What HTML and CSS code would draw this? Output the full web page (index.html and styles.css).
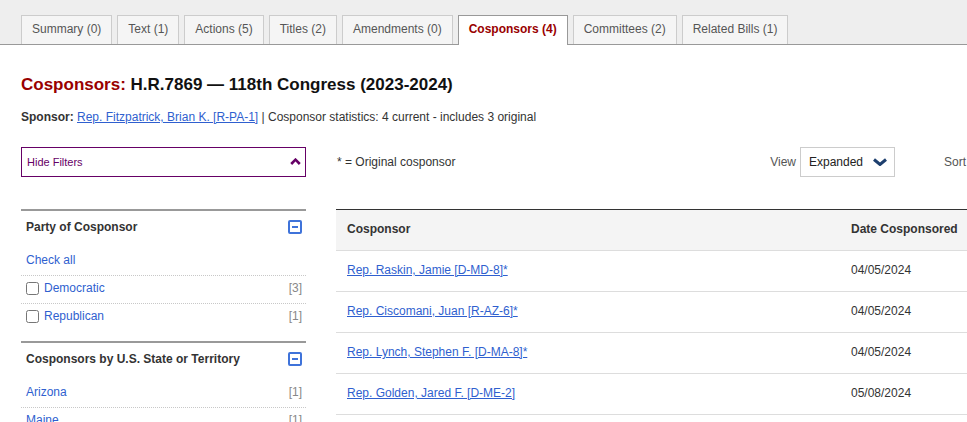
FILE: index.html
```html
<!DOCTYPE html>
<html lang="en">
<head>
<meta charset="utf-8">
<title>Cosponsors: H.R.7869 — 118th Congress (2023-2024)</title>
<link rel="stylesheet" href="styles.css">
</head>
<body>
<div class="tabbar">
  <nav class="tabs">
    <a class="tab" href="#">Summary (0)</a>
    <a class="tab" href="#">Text (1)</a>
    <a class="tab" href="#">Actions (5)</a>
    <a class="tab" href="#">Titles (2)</a>
    <a class="tab" href="#">Amendments (0)</a>
    <a class="tab tab-active" href="#">Cosponsors (4)</a>
    <a class="tab" href="#">Committees (2)</a>
    <a class="tab" href="#">Related Bills (1)</a>
  </nav>
</div>

<div class="page">
  <h1 class="title"><span class="title-label">Cosponsors:</span> H.R.7869 — 118th Congress (2023-2024)</h1>
  <p class="sponsor"><strong>Sponsor:</strong> <a href="#">Rep. Fitzpatrick, Brian K. [R-PA-1]</a> | Cosponsor statistics: 4 current - includes 3 original</p>

  <div class="layout">
    <aside class="sidebar">
      <button class="hide-filters" type="button">
        <span>Hide Filters</span>
        <svg class="chev-up" width="11" height="7" viewBox="0 0 11 7" aria-hidden="true"><polyline points="1.2,6 5.5,1.7 9.8,6" fill="none" stroke="#660066" stroke-width="2.6"/></svg>
      </button>

      <section class="facet">
        <div class="facet-head">
          <h2>Party of Cosponsor</h2>
          <span class="collapse-icon" aria-hidden="true"></span>
        </div>
        <ul class="facet-list">
          <li><a href="#">Check all</a></li>
          <li><label class="opt"><input type="checkbox"><a href="#">Democratic</a></label><span class="count">[3]</span></li>
          <li><label class="opt"><input type="checkbox"><a href="#">Republican</a></label><span class="count">[1]</span></li>
        </ul>
      </section>

      <section class="facet">
        <div class="facet-head">
          <h2>Cosponsors by U.S. State or Territory</h2>
          <span class="collapse-icon" aria-hidden="true"></span>
        </div>
        <ul class="facet-list">
          <li><a href="#">Arizona</a><span class="count">[1]</span></li>
          <li><a href="#">Maine</a><span class="count">[1]</span></li>
          <li><a href="#">Maryland</a><span class="count">[1]</span></li>
        </ul>
      </section>
    </aside>

    <main class="results">
      <div class="toolbar">
        <span class="legend">* = Original cosponsor</span>
        <div class="control">
          <span class="control-label">View</span>
          <div class="select">
            <span>Expanded</span>
            <svg width="16" height="8" viewBox="0 0 16 8" aria-hidden="true"><polyline points="2,1.5 8,6.5 14,1.5" fill="none" stroke="#1d3f6e" stroke-width="3"/></svg>
          </div>
        </div>
        <div class="control control-sort">
          <span class="control-label">Sort</span>
          <div class="select select-sort">
            <span>By Date</span>
          </div>
        </div>
      </div>

      <table class="cosponsors">
        <thead>
          <tr><th class="col-name">Cosponsor</th><th>Date Cosponsored</th></tr>
        </thead>
        <tbody>
          <tr><td><a href="#">Rep. Raskin, Jamie [D-MD-8]*</a></td><td>04/05/2024</td></tr>
          <tr><td><a href="#">Rep. Ciscomani, Juan [R-AZ-6]*</a></td><td>04/05/2024</td></tr>
          <tr><td><a href="#">Rep. Lynch, Stephen F. [D-MA-8]*</a></td><td>04/05/2024</td></tr>
          <tr><td><a href="#">Rep. Golden, Jared F. [D-ME-2]</a></td><td>05/08/2024</td></tr>
        </tbody>
      </table>
    </main>
  </div>
</div>
</body>
</html>
```

FILE: styles.css
```css
html, body {
  overflow: hidden;
}
body {
  margin: 0;
  font-family: "Liberation Sans", Arial, sans-serif;
  font-size: 12px;
  color: #333;
  background: #fff;
}
a {
  color: #2f5fcf;
}

/* Tabs */
.tabbar {
  background: #eee;
  border-bottom: 1px solid #999;
}
.tabs {
  display: flex;
  align-items: flex-end;
  gap: 5px;
  padding: 15px 0 0 21px;
  height: 29px;
}
.tab {
  display: block;
  flex: none;
  border: 1px solid #ccc;
  border-bottom: none;
  background: #f5f5f5;
  padding: 5px 10px 7px;
  line-height: 16px;
  font-size: 12px;
  color: #555;
  text-decoration: none;
  white-space: nowrap;
}
.tab-active {
  background: #fff;
  border-color: #999;
  color: #900;
  font-weight: bold;
  padding-bottom: 8px;
  margin-bottom: -1px;
}

/* Header */
.page {
  padding: 0 21px;
}
.title {
  margin: 29px 0 0;
  font-size: 17px;
  line-height: 22px;
  font-weight: bold;
  color: #111;
  white-space: nowrap;
}
.title-label {
  color: #900;
}
.sponsor {
  margin: 13px 0 0;
  line-height: 16px;
  white-space: nowrap;
}
.sponsor strong {
  color: #333;
}

/* Layout */
.layout {
  display: flex;
  gap: 30px;
  margin-top: 22px;
  align-items: flex-start;
}
.sidebar {
  flex: none;
  width: 285px;
}
.results {
  flex: none;
  width: 738px;
}

/* Sidebar */
.hide-filters {
  display: flex;
  justify-content: space-between;
  align-items: center;
  width: 285px;
  height: 30px;
  margin: 0;
  padding: 0 4px 0 5px;
  border: 1px solid #660066;
  background: #fff;
  font-family: "Liberation Sans", Arial, sans-serif;
  font-size: 11px;
  color: #660066;
  cursor: pointer;
}
.chev-up {
  display: block;
  margin-top: -1px;
}
.facet {
  margin-top: 32px;
  border-top: 2px solid #999;
  padding-bottom: 10px;
}
.facet + .facet {
  margin-top: 0;
}
.facet-head {
  display: flex;
  justify-content: space-between;
  align-items: center;
  padding: 8px 4px 8px 5px;
}
.facet-head h2 {
  margin: 0;
  font-size: 12px;
  line-height: 16px;
  font-weight: bold;
  color: #333;
}
.collapse-icon {
  position: relative;
  box-sizing: border-box;
  width: 14px;
  height: 14px;
  border: 2px solid #3f73da;
  border-radius: 2px;
}
.collapse-icon::after {
  content: "";
  position: absolute;
  left: 2px;
  right: 2px;
  top: 4px;
  height: 2px;
  background: #3f73da;
}
.facet-list {
  list-style: none;
  margin: 0;
  padding: 5px 0 0;
}
.facet-list li {
  display: flex;
  justify-content: space-between;
  align-items: center;
  padding: 5px 4px 7px 5px;
  line-height: 15px;
  border-bottom: 1px dotted #c8c8c8;
}
.facet-list li:last-child {
  border-bottom: none;
}
.facet-list a {
  text-decoration: none;
  color: #2f5fcf;
}
.opt {
  display: flex;
  align-items: center;
  gap: 5px;
}
.opt input {
  margin: 0;
  width: 13px;
  height: 13px;
}
.count {
  color: #888;
}

/* Toolbar */
.toolbar {
  display: flex;
  align-items: center;
  height: 30px;
}
.legend {
  flex: 1;
  padding-left: 1px;
}
.control {
  display: flex;
  align-items: center;
  gap: 4px;
}
.control-label {
  color: #555;
}
.control-sort {
  margin-left: 49px;
}
.select {
  display: flex;
  align-items: center;
  justify-content: space-between;
  box-sizing: border-box;
  width: 95px;
  height: 30px;
  padding: 0 6px 0 8px;
  border: 1px solid #ccc;
  color: #222;
}
.select-sort {
  width: 104px;
}

/* Table */
.cosponsors {
  width: 740px;
  margin-top: 32px;
  border-collapse: collapse;
  border-top: 1px solid #333;
}
.cosponsors th {
  text-align: left;
  background: #f4f4f4;
  padding: 11px 11px 13px;
  line-height: 16px;
  font-weight: bold;
  color: #333;
  border-bottom: 1px solid #ddd;
}
.cosponsors .col-name {
  width: 482px;
}
.cosponsors td {
  padding: 12px 11px 13px;
  line-height: 15px;
  border-bottom: 1px solid #ddd;
  color: #333;
}
```
